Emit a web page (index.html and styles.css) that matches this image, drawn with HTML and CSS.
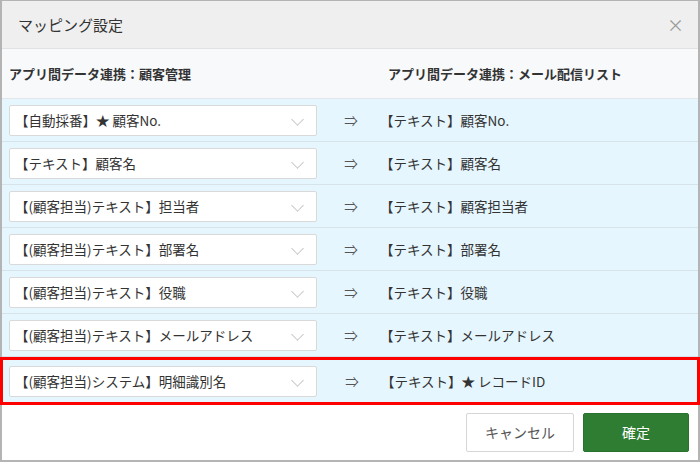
FILE: index.html
```html
<!DOCTYPE html>
<html lang="ja">
<head>
    <meta charset="UTF-8">
    <title>マッピング設定</title>
    <link rel="stylesheet" href="styles.css">
</head>
<body>

<div class="dialog">
    <div class="head">
        <div class="title">マッピング設定</div>
        <div class="close">×</div>
    </div>

    <div class="cols">
        <div class="src">アプリ間データ連携：顧客管理</div>
        <div class="arrow"></div>
        <div class="dst">アプリ間データ連携：メール配信リスト</div>
    </div>

    <div class="list">
        <div class="row">
            <div class="src"><div class="select">【自動採番】★ 顧客No.<i class="chev"></i></div></div>
            <div class="arrow">⇒</div>
            <div class="dst">【テキスト】顧客No.</div>
        </div>
        <div class="row">
            <div class="src"><div class="select">【テキスト】顧客名<i class="chev"></i></div></div>
            <div class="arrow">⇒</div>
            <div class="dst">【テキスト】顧客名</div>
        </div>
        <div class="row">
            <div class="src"><div class="select">【(顧客担当)テキスト】担当者<i class="chev"></i></div></div>
            <div class="arrow">⇒</div>
            <div class="dst">【テキスト】顧客担当者</div>
        </div>
        <div class="row">
            <div class="src"><div class="select">【(顧客担当)テキスト】部署名<i class="chev"></i></div></div>
            <div class="arrow">⇒</div>
            <div class="dst">【テキスト】部署名</div>
        </div>
        <div class="row">
            <div class="src"><div class="select">【(顧客担当)テキスト】役職<i class="chev"></i></div></div>
            <div class="arrow">⇒</div>
            <div class="dst">【テキスト】役職</div>
        </div>
        <div class="row">
            <div class="src"><div class="select">【(顧客担当)テキスト】メールアドレス<i class="chev"></i></div></div>
            <div class="arrow">⇒</div>
            <div class="dst">【テキスト】メールアドレス</div>
        </div>
        <div class="row mark">
            <div class="src"><div class="select">【(顧客担当)システム】明細識別名<i class="chev"></i></div></div>
            <div class="arrow">⇒</div>
            <div class="dst">【テキスト】★ レコードID</div>
        </div>
    </div>

    <div class="foot">
        <div class="btn cancel">キャンセル</div>
        <div class="btn ok">確定</div>
    </div>
</div>

</body>
</html>
```

FILE: styles.css
```css
* {
    padding: 0;
    margin: 0;
    box-sizing: border-box;
}
body {
    font-family: "Noto Sans CJK JP", "Noto Sans", sans-serif;
    font-size: 13.5px;
    color: #333;
    background: #fff;
}
.dialog {
    width: 700px;
    height: 462px;
    border: 2px solid #b4b4b4;
    border-top-width: 1px;
    display: flex;
    flex-direction: column;
}
.head {
    height: 48px;
    display: flex;
    align-items: center;
    justify-content: space-between;
    padding: 0 14px 0 16px;
    background: #efefef;
    border-bottom: 1px solid #e2e2e2;
}
.head .title {
    font-size: 15px;
    color: #333;
}
.head .close {
    font-size: 17px;
    color: #999;
    cursor: pointer;
}
.cols,
.row {
    display: flex;
    align-items: center;
}
.cols {
    height: 50px;
    font-size: 13px;
    background: #f7f9fb;
    border-bottom: 1px solid #e3e7ea;
    font-weight: 700;
    color: #333;
}
.src {
    width: 324px;
    padding-left: 7px;
}
.arrow {
    width: 50px;
    text-align: center;
    color: #555;
}
.dst {
    padding-left: 4px;
}
.cols .dst {
    padding-left: 12px;
}
.row {
    height: 43px;
    background: #e6f6fe;
    border-bottom: 1px solid #d6e3e9;
}
.select {
    position: relative;
    width: 308px;
    height: 31px;
    line-height: 29px;
    padding-left: 5px;
    background: #fff;
    border: 1px solid #d9d9d9;
    border-radius: 2px;
}
.chev {
    position: absolute;
    right: 14px;
    top: 9px;
    width: 9px;
    height: 9px;
    border-right: 1px solid #c8c8c8;
    border-bottom: 1px solid #c8c8c8;
    transform: rotate(45deg);
}
.row.mark {
    height: 48px;
    margin: 0 -2px;
    border: 3px solid #f00;
}
.row.mark .src {
    padding-left: 6px;
}
.foot {
    flex: 1;
    display: flex;
    justify-content: flex-end;
    align-items: center;
    gap: 9px;
    padding-right: 9px;
}
.btn {
    height: 39px;
    line-height: 37px;
    text-align: center;
    font-size: 14px;
    border-radius: 2px;
    cursor: pointer;
}
.btn.cancel {
    width: 108px;
    border: 1px solid #d6d6d6;
    color: #555;
    background: #fff;
}
.btn.ok {
    width: 106px;
    border: 1px solid #2a7230;
    color: #fff;
    background: #2e7d32;
}
```
